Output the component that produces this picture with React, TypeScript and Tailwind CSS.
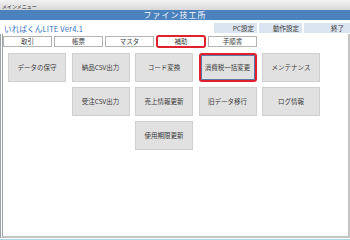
import React from 'react';

const font = { fontFamily: '"Noto Sans CJK JP", "Noto Sans", sans-serif' };

interface MenuButton {
  label: string;
  col: string;
  active?: boolean;
}

const rows: MenuButton[][] = [
  [
    { label: 'データの保守', col: 'col-start-1' },
    { label: '納品CSV出力', col: 'col-start-2' },
    { label: 'コード変換', col: 'col-start-3' },
    { label: '消費税一括変更', col: 'col-start-4', active: true },
    { label: 'メンテナンス', col: 'col-start-5' },
  ],
  [
    { label: '受注CSV出力', col: 'col-start-2' },
    { label: '売上情報更新', col: 'col-start-3' },
    { label: '旧データ移行', col: 'col-start-4' },
    { label: 'ログ情報', col: 'col-start-5' },
  ],
  [{ label: '使用期限更新', col: 'col-start-3' }],
];

const tabs = ['取引', '帳票', 'マスタ', '補助', '手順書'];

export default function App() {
  return (
    <div className="w-[350px] h-[240px] bg-white overflow-hidden flex flex-col text-[#3a3a3a]" style={font}>
      {/* window title */}
      <div className="h-[10px] bg-gradient-to-b from-[#f2f2f2] to-[#d9d9d9] flex items-center px-[2px] text-[5px] leading-none text-[#222]">
        メインメニュー
      </div>

      {/* app title */}
      <div className="h-[10px] bg-[#4b81bd] flex items-center justify-center text-white text-[8px] leading-none tracking-[1px]">
        ファイン技工所
      </div>

      {/* version + settings */}
      <div className="h-[14px] flex items-end justify-between">
        <span className="pl-[4px] pb-[2px] text-[7.5px] leading-none text-[#2f6fc0] tracking-[0.2px]">いればくんLITE Ver4.1</span>
        <div className="flex gap-[2px] pb-[1px]">
          <div className="w-[43px] h-[10px] bg-[#dbe5f1] flex items-center justify-end pr-[3px] text-[6.5px] leading-none">PC設定</div>
          <div className="w-[43px] h-[10px] bg-[#dbe5f1] flex items-center justify-end pr-[3px] text-[6.5px] leading-none">動作設定</div>
          <div className="w-[46px] h-[10px] bg-[#dbe5f1] flex items-center justify-end pr-[6px] text-[6.5px] leading-none">終了</div>
        </div>
      </div>

      {/* panel */}
      <div className="flex-1 flex flex-col border-l-[3px] border-double border-l-[#9ea3a8] border-r-2 border-r-[#c4c4c4] border-b-2 border-b-[#c4c4c4] mb-[1px]">
        <div className="h-[14px] flex items-center gap-[2px]">
          {tabs.map((t) => (
            <div
              key={t}
              className={
                t === '補助'
                  ? 'w-[50px] h-[13px] border-2 border-[#e0202a] rounded-[3px] bg-white flex items-center justify-center text-[6.5px] leading-none'
                  : 'w-[49px] h-[11px] border border-[#b4b4b4] bg-white flex items-center justify-center text-[6.5px] leading-none'
              }
            >
              {t}
            </div>
          ))}
        </div>

        <div className="grid grid-cols-[repeat(5,58px)] gap-x-[5.5px] gap-y-[5px] pl-[5px] pt-[5px]">
          {rows.flat().map((b) => (
            <div
              key={b.label}
              className={`${b.col} h-[29px] flex items-center justify-center text-[6.5px] leading-none ${
                b.active
                  ? 'border-2 border-[#e0202a] rounded-[3px] bg-[#e1e1e1] shadow-[inset_0_0_0_1px_#5a78a8]'
                  : 'border border-[#cfcfcf] bg-[#e1e1e1]'
              }`}
            >
              {b.label}
            </div>
          ))}
        </div>
      </div>
      <div className="h-[1px] bg-[#a6d8ea]" />
    </div>
  );
}
